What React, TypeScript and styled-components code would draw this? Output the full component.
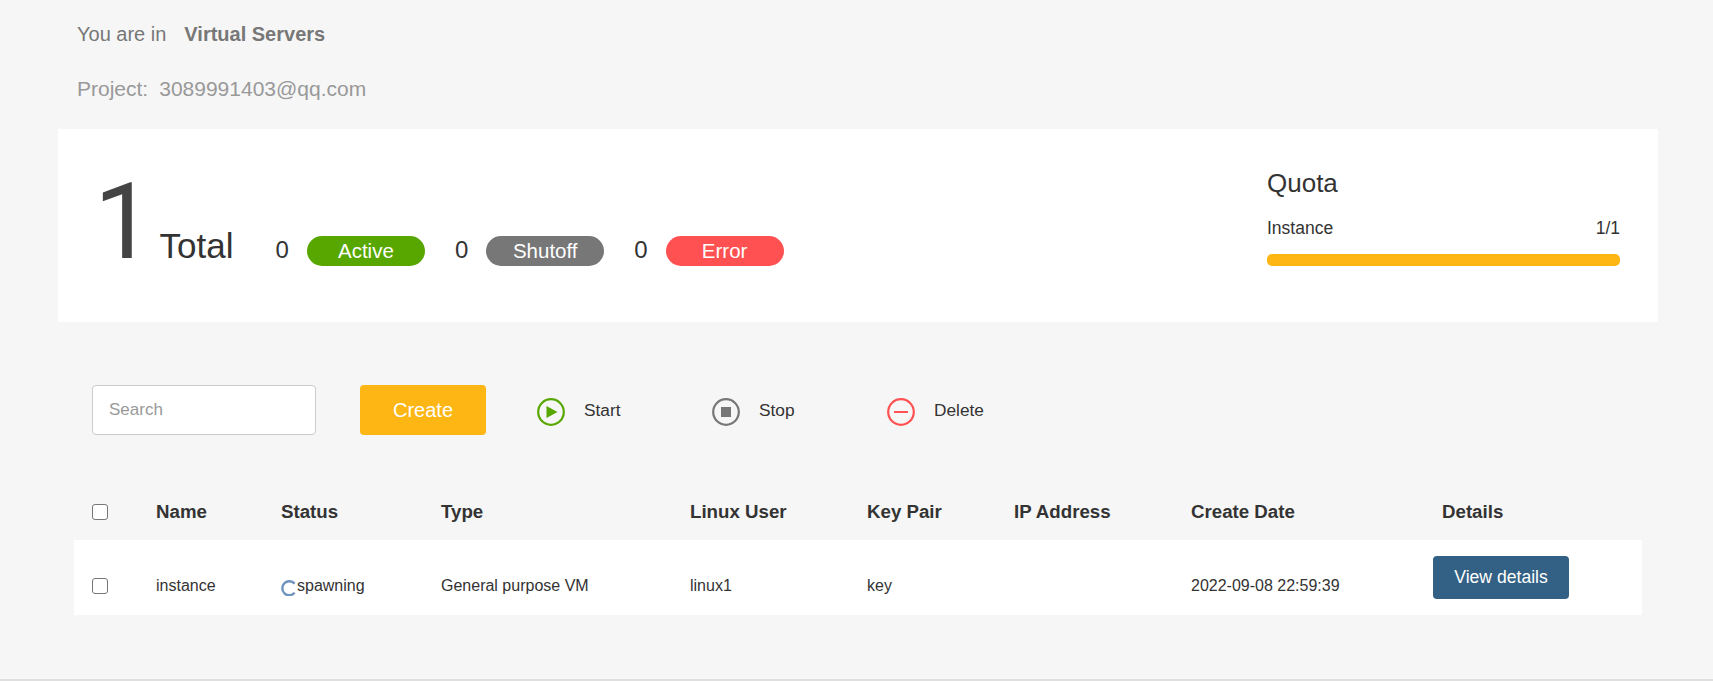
import React from "react";
import styled, { createGlobalStyle } from "styled-components";

const GlobalStyle = createGlobalStyle`
  html, body {
    margin: 0;
    padding: 0;
    background: #f6f6f6;
    font-family: "Liberation Sans", Arial, sans-serif;
    color: #333;
  }
  * {
    box-sizing: border-box;
  }
`;

const columns = "64px 125px 160px 249px 177px 147px 177px 251px auto";

const statuses = [
  { label: "Active", color: "#58a700" },
  { label: "Shutoff", color: "#777777" },
  { label: "Error", color: "#ff5151" },
];

const headers = [
  "Name",
  "Status",
  "Type",
  "Linux User",
  "Key Pair",
  "IP Address",
  "Create Date",
  "Details",
];

export default function App() {
  return (
    <>
      <GlobalStyle />
      <Page>
        <Crumbs>
          <CrumbLine>
            You are in<CrumbStrong>Virtual Servers</CrumbStrong>
          </CrumbLine>
          <ProjectLine>
            Project:<ProjectName>3089991403@qq.com</ProjectName>
          </ProjectLine>
        </Crumbs>

        <Summary>
          <Totals>
            <BigNumber>1</BigNumber>
            <TotalLabel>Total</TotalLabel>
            {statuses.map((s) => (
              <StatusGroup key={s.label}>
                <StatusCount>0</StatusCount>
                <Pill $color={s.color}>{s.label}</Pill>
              </StatusGroup>
            ))}
          </Totals>
          <Quota>
            <QuotaTitle>Quota</QuotaTitle>
            <QuotaRow>
              <span>Instance</span>
              <span>1/1</span>
            </QuotaRow>
            <QuotaBar />
          </Quota>
        </Summary>

        <Toolbar>
          <SearchInput placeholder="Search" />
          <CreateButton>Create</CreateButton>
          <Action>
            <ActionIcon viewBox="0 0 28 28" $color="#58a700">
              <circle cx="14" cy="14" r="12.8" />
              <path d="M9.5 8 L20.5 14 L9.5 20 Z" fill="#58a700" stroke="none" />
            </ActionIcon>
            <ActionLabel>Start</ActionLabel>
          </Action>
          <Action>
            <ActionIcon viewBox="0 0 28 28" $color="#777777">
              <circle cx="14" cy="14" r="12.8" />
              <rect x="9" y="9" width="10" height="10" fill="#777777" stroke="none" />
            </ActionIcon>
            <ActionLabel>Stop</ActionLabel>
          </Action>
          <Action>
            <ActionIcon viewBox="0 0 28 28" $color="#ff5151">
              <circle cx="14" cy="14" r="12.8" />
              <rect x="7" y="13" width="14" height="2" fill="#ff5151" stroke="none" />
            </ActionIcon>
            <ActionLabel>Delete</ActionLabel>
          </Action>
        </Toolbar>

        <Table>
          <HeadRow>
            <Check type="checkbox" />
            {headers.map((h) => (
              <HeadCell key={h}>{h}</HeadCell>
            ))}
          </HeadRow>
          <BodyRow>
            <Cell>
              <Check type="checkbox" />
            </Cell>
            <Cell>instance</Cell>
            <Cell>
              <Spinner viewBox="0 0 16 16">
                <path d="M13.6 3.6 A7 7 0 1 0 13.6 12.8" />
              </Spinner>
              spawning
            </Cell>
            <Cell>General purpose VM</Cell>
            <Cell>linux1</Cell>
            <Cell>key</Cell>
            <Cell />
            <Cell>2022-09-08 22:59:39</Cell>
            <ButtonCell>
              <DetailsButton>View details</DetailsButton>
            </ButtonCell>
          </BodyRow>
        </Table>
      </Page>
      <FooterLine />
    </>
  );
}

const Page = styled.div`
  padding: 22px 55px 0 58px;
`;

const Crumbs = styled.div`
  padding-left: 19px;
  display: flex;
  flex-direction: column;
  gap: 31px;
  margin-bottom: 28px;
  line-height: 24px;
`;

const CrumbLine = styled.div`
  color: #777;
  font-size: 20px;
`;

const CrumbStrong = styled.strong`
  margin-left: 18px;
`;

const ProjectLine = styled.div`
  color: #999;
  font-size: 21px;
`;

const ProjectName = styled.span`
  margin-left: 11px;
`;

const Summary = styled.section`
  height: 193px;
  background: #fff;
  display: flex;
  justify-content: space-between;
  align-items: flex-start;
  padding: 0 38px 0 36px;
`;

const Totals = styled.div`
  display: flex;
  align-items: baseline;
  padding-top: 40px;
`;

const BigNumber = styled.span`
  font-family: Roboto, "Liberation Sans", sans-serif;
  font-size: 106px;
  line-height: 1;
  color: #444;
`;

const TotalLabel = styled.span`
  font-size: 35px;
  margin-left: 6px;
  margin-right: 42px;
  color: #333;
`;

const StatusGroup = styled.div`
  display: flex;
  align-items: baseline;
  margin-right: 30px;
`;

const StatusCount = styled.span`
  font-size: 24px;
  margin-right: 18px;
`;

const Pill = styled.span<{ $color: string }>`
  width: 118px;
  height: 30px;
  border-radius: 15px;
  background: ${(p) => p.$color};
  color: #fff;
  font-size: 20.5px;
  line-height: 30px;
  text-align: center;
`;

const Quota = styled.div`
  width: 353px;
  padding-top: 39px;
`;

const QuotaTitle = styled.div`
  font-size: 26px;
  line-height: 30px;
`;

const QuotaRow = styled.div`
  display: flex;
  justify-content: space-between;
  margin-top: 19px;
  font-size: 17.5px;
  line-height: 22px;
`;

const QuotaBar = styled.div`
  height: 12px;
  margin-top: 15px;
  border-radius: 5px;
  background: #fdb614;
`;

const Toolbar = styled.div`
  display: flex;
  align-items: center;
  margin-top: 63px;
  padding-left: 34px;
`;

const SearchInput = styled.input`
  width: 224px;
  height: 50px;
  padding: 0 16px;
  border: 1px solid #ccc;
  border-radius: 4px;
  background: #fff;
  font: 17px "Liberation Sans", Arial, sans-serif;
  outline: none;
  &::placeholder {
    color: #999;
  }
`;

const CreateButton = styled.button`
  width: 126px;
  height: 50px;
  margin-left: 44px;
  margin-right: 51px;
  border: none;
  border-radius: 4px;
  background: #fdb614;
  color: #fff;
  font: 20px "Liberation Sans", Arial, sans-serif;
`;

const Action = styled.div`
  width: 175px;
  display: flex;
  align-items: center;
  gap: 19px;
`;

const ActionIcon = styled.svg<{ $color: string }>`
  width: 28px;
  height: 28px;
  margin-top: 3px;
  fill: none;
  stroke: ${(p) => p.$color};
  stroke-width: 2.2;
`;

const ActionLabel = styled.span`
  font-size: 17.3px;
  line-height: 20px;
`;

const Table = styled.div`
  margin: 50px 0 0 16px;
  width: 1568px;
`;

const HeadRow = styled.div`
  display: grid;
  grid-template-columns: ${columns};
  align-items: center;
  height: 55px;
  padding: 0 0 2px 18px;
`;

const HeadCell = styled.div`
  font-size: 18.7px;
  font-weight: 700;
`;

const BodyRow = styled.div`
  display: grid;
  grid-template-columns: ${columns};
  align-items: start;
  height: 75px;
  padding-left: 18px;
  background: #fff;
`;

const Cell = styled.div`
  display: flex;
  align-items: center;
  height: 20px;
  margin-top: 36px;
  font-size: 16px;
  line-height: 20px;
  white-space: nowrap;
`;

const ButtonCell = styled.div`
  margin-top: 16px;
  margin-left: -9px;
`;

const Check = styled.input`
  appearance: none;
  display: block;
  width: 16px;
  height: 16px;
  margin: 0;
  background: #fff;
  border: 1px solid #767676;
  border-radius: 3px;
`;

const Spinner = styled.svg`
  width: 16px;
  height: 16px;
  flex: none;
  margin: 3px 0 0 0;
  fill: none;
  stroke: #6f94bd;
  stroke-width: 2.4;
`;

const DetailsButton = styled.button`
  width: 136px;
  height: 43px;
  border: none;
  border-radius: 4px;
  background: #336185;
  color: #fff;
  font: 17.6px "Liberation Sans", Arial, sans-serif;
`;

const FooterLine = styled.div`
  margin-top: 64px;
  height: 2px;
  background: #dfdfdf;
`;
